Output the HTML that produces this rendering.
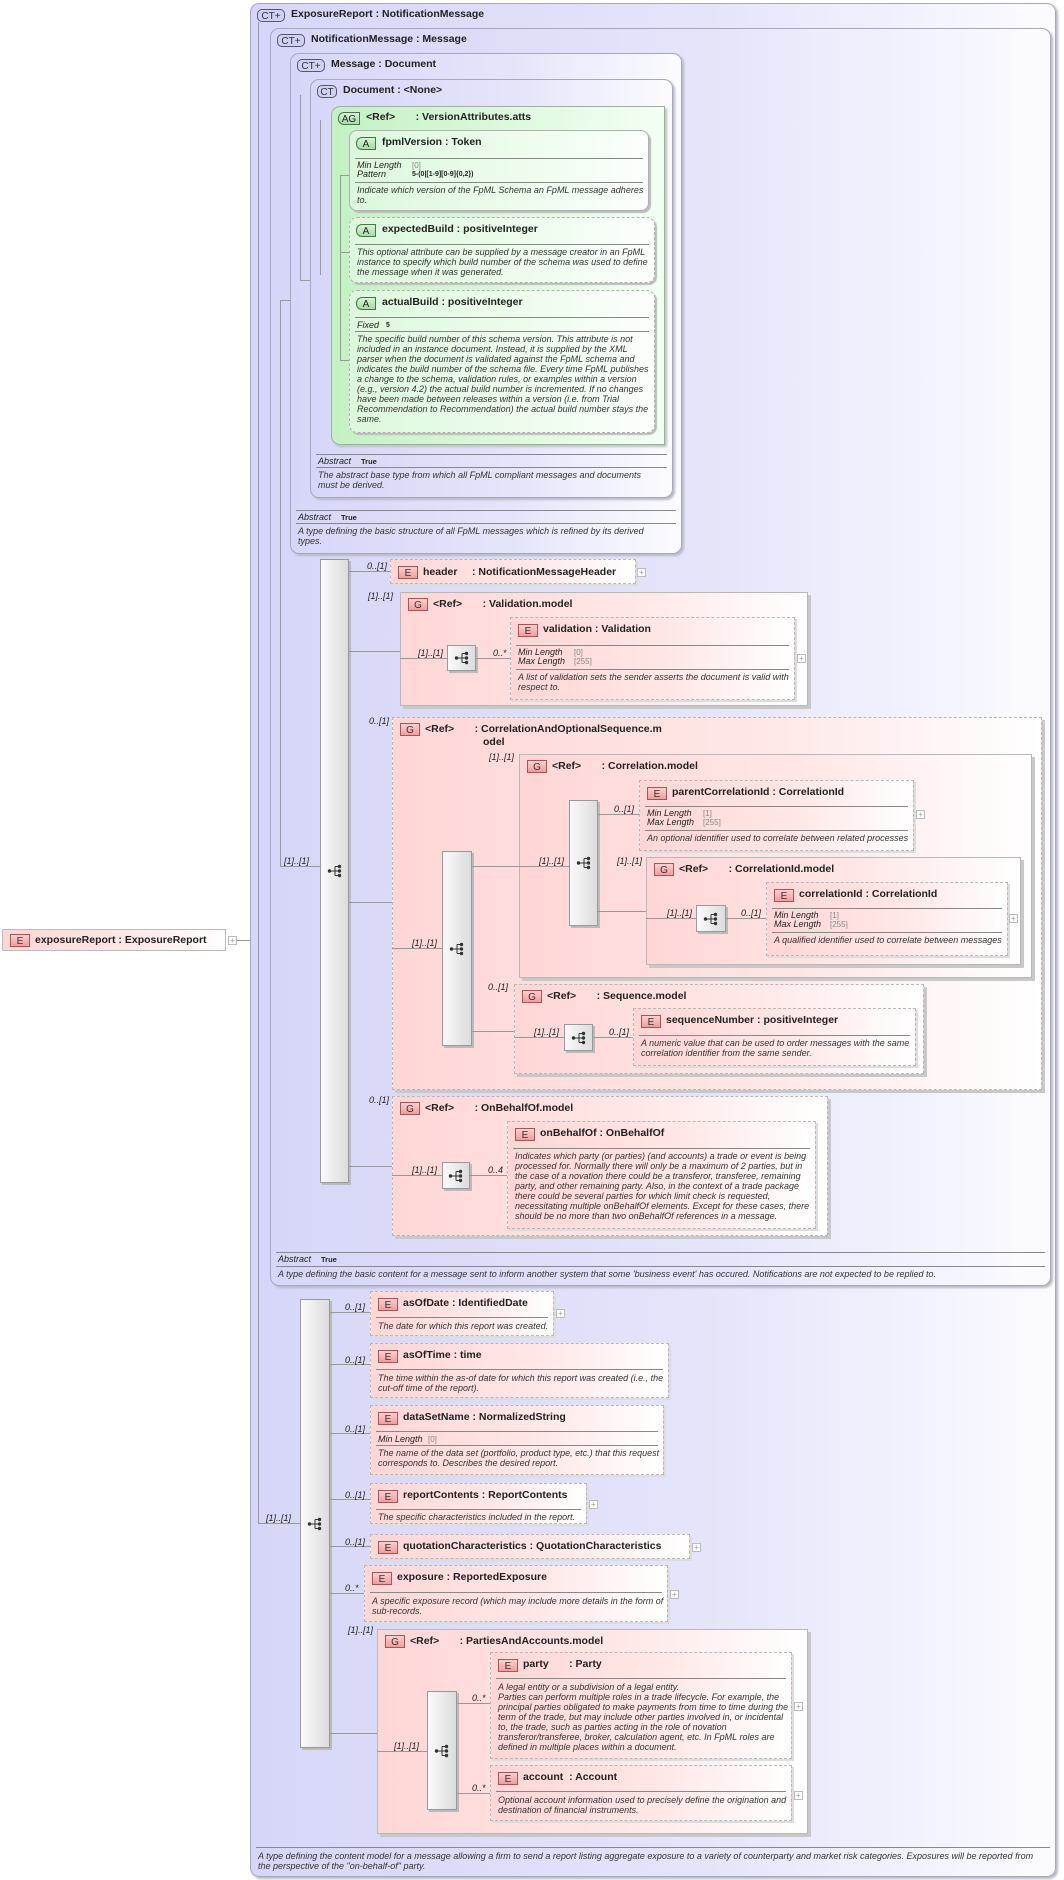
<!DOCTYPE html>
<html><head><meta charset="utf-8">
<style>
body{margin:0;width:1064px;height:1880px;background:#fff;position:relative;overflow:hidden;font-family:"Liberation Sans",sans-serif;color:#222}
.b{position:absolute;box-sizing:border-box}
.ct{border:1px solid #a8a8bc;border-radius:9px;background:linear-gradient(90deg,#d6d6f8 0%,#e4e4fa 55%,#fbfbff 100%);box-shadow:2px 2px 2px #b8b8c8}
.ag{border:1px solid #a0b0a0;border-radius:9px 0 0 9px;background:linear-gradient(90deg,#c4f0c4,#f4fff4);box-shadow:2px 2px 2px #b8c8b8}
.at{border:1px solid #b0b0b0;border-radius:8px;background:linear-gradient(90deg,#dcf8dc,#fbfffb);box-shadow:2px 2px 1px #bbb}
.pk{border:1px solid #b8b8b8;background:linear-gradient(90deg,#ffd6d6 0%,#ffe8e8 60%,#fff 100%);box-shadow:3px 3px 0 #c8c8c8}
.d{border-style:dashed}
.t{position:absolute;font-weight:bold;font-size:10.5px;white-space:nowrap;top:5px;left:32px}
.bg{position:absolute;left:7px;top:5px;height:13px;font-size:10px;line-height:13px;text-align:center;box-sizing:border-box}
.bE{width:20px;background:linear-gradient(180deg,#fbd0d0,#f29c9c);border:1px solid #a55;color:#333}
.bA{width:20px;background:linear-gradient(180deg,#d8f4d8,#a8dca8);border:1px solid #474;border-radius:6px 0 0 6px}
.bC{background:#d0d0f2;border:1px solid #557;border-radius:5px;color:#333}
.hr{position:absolute;left:5px;right:5px;height:1px;background:#888}
.ds{position:absolute;left:7px;font-style:italic;font-size:9px;line-height:10px;white-space:nowrap;color:#333}
.pr{position:absolute;left:7px;font-style:italic;font-size:9px;line-height:9px;white-space:nowrap}
.pv{color:#888;font-style:normal;font-size:8px}
.l{position:absolute;background:#999}
.lb{position:absolute;font-style:italic;font-size:9px;white-space:nowrap;color:#222}
.bar{position:absolute;box-sizing:border-box;border:1px solid #999;background:linear-gradient(90deg,#fafafa,#dcdcdc);box-shadow:2px 2px 0 #bbb}
.ic{position:absolute;left:50%;top:50%;margin:-7px 0 0 -8px}
.pl{position:absolute;width:9px;height:9px;box-sizing:border-box;border:1px solid #bbb;background:#fff;font-size:8px;line-height:7px;text-align:center;color:#999}
</style></head><body>
<svg width="0" height="0" style="position:absolute"><defs><symbol id="sq" viewBox="0 0 16 14"><circle cx="2.5" cy="7" r="1.7" fill="#333"/><path d="M2.5 7H8M8 2.5V11.5M8 2.5H12M8 7H12M8 11.5H12" stroke="#333" stroke-width="1" fill="none"/><circle cx="12.5" cy="2.5" r="1.7" fill="#333"/><circle cx="12.5" cy="7" r="1.7" fill="#333"/><circle cx="12.5" cy="11.5" r="1.7" fill="#333"/></symbol></defs></svg>

<div class="b pk" style="left:2px;top:929px;width:224px;height:22px;box-shadow:none;border-color:#bbb"><div class="bg bE" style="top:4px">E</div><div class="t" style="top:4px">exposureReport : ExposureReport</div></div>
<div class="pl" style="left:228px;top:936px">+</div>
<div class="l" style="left:237px;top:940px;width:13px;height:1px"></div>

<div class="b ct" style="left:250px;top:3px;width:806px;height:1874px">
 <div class="bg bC" style="width:28px;left:6px">CT+</div><div class="t" style="left:40px;top:4px">ExposureReport : NotificationMessage</div>
 <div class="hr" style="top:1843px"></div>
 <div class="ds" style="top:1847px">A type defining the content model for a message allowing a firm to send a report listing aggregate exposure to a variety of counterparty and market risk categories. Exposures will be reported from<br>the perspective of the "on-behalf-of" party.</div>
</div>
<div class="l" style="left:258px;top:22px;width:1px;height:1502px"></div>
<div class="l" style="left:258px;top:1523px;width:42px;height:1px"></div>
<div class="lb" style="left:266px;top:1513px">[1]..[1]</div>

<div class="b ct" style="left:270px;top:28px;width:781px;height:1258px">
 <div class="bg bC" style="width:28px;left:6px">CT+</div><div class="t" style="left:40px;top:4px">NotificationMessage : Message</div>
 <div class="hr" style="top:1223px"></div>
 <div class="pr" style="top:1226px">Abstract &nbsp;&nbsp;&nbsp;<b style="font-style:normal;font-size:7.5px">True</b></div>
 <div class="hr" style="top:1237px"></div>
 <div class="ds" style="top:1240px">A type defining the basic content for a message sent to inform another system that some 'business event' has occured. Notifications are not expected to be replied to.</div>
</div>
<div class="l" style="left:280px;top:300px;width:1px;height:566px"></div>
<div class="l" style="left:280px;top:300px;width:10px;height:1px"></div>
<div class="l" style="left:280px;top:866px;width:40px;height:1px"></div>
<div class="lb" style="left:284px;top:856px">[1]..[1]</div>

<div class="b ct" style="left:290px;top:53px;width:392px;height:501px">
 <div class="bg bC" style="width:28px;left:6px">CT+</div><div class="t" style="left:40px;top:4px">Message : Document</div>
 <div class="hr" style="top:456px"></div>
 <div class="pr" style="top:459px">Abstract &nbsp;&nbsp;&nbsp;<b style="font-style:normal;font-size:7.5px">True</b></div>
 <div class="hr" style="top:469px"></div>
 <div class="ds" style="top:472px">A type defining the basic structure of all FpML messages which is refined by its derived<br>types.</div>
</div>
<div class="l" style="left:300px;top:95px;width:1px;height:185px"></div>
<div class="l" style="left:300px;top:280px;width:10px;height:1px"></div>

<div class="b ct" style="left:310px;top:79px;width:363px;height:419px">
 <div class="bg bC" style="width:20px;left:6px">CT</div><div class="t" style="top:4px">Document : &lt;None&gt;</div>
 <div class="hr" style="top:374px"></div>
 <div class="pr" style="top:377px">Abstract &nbsp;&nbsp;&nbsp;<b style="font-style:normal;font-size:7.5px">True</b></div>
 <div class="hr" style="top:387px"></div>
 <div class="ds" style="top:390px">The abstract base type from which all FpML compliant messages and documents<br>must be derived.</div>
</div>
<div class="l" style="left:320px;top:120px;width:1px;height:155px"></div>

<div class="b ag" style="left:331px;top:106px;width:334px;height:339px">
 <div class="bg bA" style="width:22px;left:6px">AG</div><div class="t" style="left:34px;top:4px">&lt;Ref&gt; &nbsp;&nbsp;&nbsp;&nbsp;&nbsp; : VersionAttributes.atts</div>
</div>
<div class="l" style="left:340px;top:175px;width:1px;height:185px"></div>
<div class="l" style="left:340px;top:175px;width:9px;height:1px"></div>
<div class="l" style="left:340px;top:252px;width:9px;height:1px"></div>
<div class="l" style="left:340px;top:360px;width:9px;height:1px"></div>

<div class="b at" style="left:349px;top:130px;width:300px;height:81px">
 <div class="bg bA" style="left:6px;top:6px">A</div><div class="t">fpmlVersion : Token</div>
 <div class="hr" style="top:27px"></div>
 <div class="pr" style="top:30px">Min Length</div><div class="pr pv" style="left:62px;top:30px">[0]</div>
 <div class="pr" style="top:39px">Pattern</div><div class="pr" style="left:62px;top:39px;font-style:normal;font-weight:bold;font-size:7px">5-(0|[1-9][0-9]{0,2})</div>
 <div class="hr" style="top:51px"></div>
 <div class="ds" style="top:54px">Indicate which version of the FpML Schema an FpML message adheres<br>to.</div>
</div>
<div class="b at d" style="left:349px;top:217px;width:306px;height:66px">
 <div class="bg bA" style="left:6px;top:6px">A</div><div class="t">expectedBuild : positiveInteger</div>
 <div class="hr" style="top:26px"></div>
 <div class="ds" style="top:29px">This optional attribute can be supplied by a message creator in an FpML<br>instance to specify which build number of the schema was used to define<br>the message when it was generated.</div>
</div>
<div class="b at d" style="left:349px;top:290px;width:306px;height:143px">
 <div class="bg bA" style="left:6px;top:6px">A</div><div class="t">actualBuild : positiveInteger</div>
 <div class="hr" style="top:26px"></div>
 <div class="pr" style="top:30px">Fixed</div><div class="pr" style="left:36px;top:30px;font-style:normal;font-weight:bold;font-size:7px">5</div>
 <div class="hr" style="top:40px"></div>
 <div class="ds" style="top:43px">The specific build number of this schema version. This attribute is not<br>included in an instance document. Instead, it is supplied by the XML<br>parser when the document is validated against the FpML schema and<br>indicates the build number of the schema file. Every time FpML publishes<br>a change to the schema, validation rules, or examples within a version<br>(e.g., version 4.2) the actual build number is incremented. If no changes<br>have been made between releases within a version (i.e. from Trial<br>Recommendation to Recommendation) the actual build number stays the<br>same.</div>
</div>

<div class="bar" style="left:320px;top:559px;width:29px;height:624px"><svg class="ic" width="16" height="14"><use href="#sq"/></svg></div>
<div class="l" style="left:349px;top:571px;width:41px;height:1px"></div><div class="lb" style="left:367px;top:561px">0..[1]</div>
<div class="l" style="left:349px;top:651px;width:51px;height:1px"></div><div class="lb" style="left:368px;top:591px">[1]..[1]</div>
<div class="l" style="left:349px;top:902px;width:43px;height:1px"></div><div class="lb" style="left:369px;top:716px">0..[1]</div>
<div class="l" style="left:349px;top:1166px;width:43px;height:1px"></div><div class="lb" style="left:369px;top:1095px">0..[1]</div>

<div class="b pk d" style="left:390px;top:559px;width:246px;height:25px;box-shadow:2px 2px 0 #ddd">
 <div class="bg bE" style="top:6px">E</div><div class="t" style="top:6px">header &nbsp;&nbsp;&nbsp; : NotificationMessageHeader</div></div>
<div class="pl" style="left:637px;top:568px">+</div>

<div class="b pk" style="left:400px;top:592px;width:408px;height:114px">
 <div class="bg bE">G</div><div class="t">&lt;Ref&gt; &nbsp;&nbsp;&nbsp;&nbsp;&nbsp; : Validation.model</div></div>
<div class="l" style="left:400px;top:658px;width:47px;height:1px"></div><div class="lb" style="left:418px;top:648px">[1]..[1]</div>
<div class="bar" style="left:447px;top:645px;width:29px;height:26px"><svg class="ic" width="16" height="14"><use href="#sq"/></svg></div>
<div class="l" style="left:476px;top:658px;width:34px;height:1px"></div><div class="lb" style="left:493px;top:648px">0..*</div>
<div class="b pk d" style="left:510px;top:617px;width:285px;height:83px;box-shadow:2px 2px 0 #ddd">
 <div class="bg bE" style="top:6px">E</div><div class="t" style="top:5px">validation : Validation</div>
 <div class="hr" style="top:27px"></div>
 <div class="pr" style="top:30px">Min Length<br>Max Length</div><div class="pr pv" style="left:63px;top:30px">[0]<br>[255]</div>
 <div class="hr" style="top:51px"></div>
 <div class="ds" style="top:54px">A list of validation sets the sender asserts the document is valid with<br>respect to.</div>
</div>
<div class="pl" style="left:797px;top:654px">+</div>

<div class="b pk d" style="left:392px;top:717px;width:650px;height:373px">
 <div class="bg bE">G</div><div class="t" style="line-height:13px">&lt;Ref&gt; &nbsp;&nbsp;&nbsp;&nbsp;&nbsp; : CorrelationAndOptionalSequence.m<br><span style="padding-left:58px">odel</span></div></div>
<div class="l" style="left:392px;top:948px;width:50px;height:1px"></div><div class="lb" style="left:412px;top:938px">[1]..[1]</div>
<div class="bar" style="left:442px;top:851px;width:30px;height:195px"><svg class="ic" width="16" height="14"><use href="#sq"/></svg></div>
<div class="l" style="left:472px;top:866px;width:47px;height:1px"></div><div class="lb" style="left:489px;top:752px">[1]..[1]</div>
<div class="l" style="left:472px;top:1031px;width:42px;height:1px"></div><div class="lb" style="left:488px;top:982px">0..[1]</div>

<div class="b pk" style="left:519px;top:754px;width:513px;height:224px">
 <div class="bg bE">G</div><div class="t">&lt;Ref&gt; &nbsp;&nbsp;&nbsp;&nbsp;&nbsp; : Correlation.model</div></div>
<div class="l" style="left:519px;top:866px;width:50px;height:1px"></div><div class="lb" style="left:539px;top:856px">[1]..[1]</div>
<div class="bar" style="left:569px;top:800px;width:29px;height:126px"><svg class="ic" width="16" height="14"><use href="#sq"/></svg></div>
<div class="l" style="left:598px;top:814px;width:41px;height:1px"></div><div class="lb" style="left:614px;top:804px">0..[1]</div>
<div class="l" style="left:598px;top:911px;width:48px;height:1px"></div><div class="lb" style="left:617px;top:856px">[1]..[1]</div>

<div class="b pk d" style="left:639px;top:780px;width:275px;height:71px;box-shadow:2px 2px 0 #ddd">
 <div class="bg bE" style="top:6px">E</div><div class="t" style="top:5px">parentCorrelationId : CorrelationId</div>
 <div class="hr" style="top:25px"></div>
 <div class="pr" style="top:28px">Min Length<br>Max Length</div><div class="pr pv" style="left:63px;top:28px">[1]<br>[255]</div>
 <div class="hr" style="top:49px"></div>
 <div class="ds" style="top:52px">An optional identifier used to correlate between related processes</div>
</div>
<div class="pl" style="left:916px;top:810px">+</div>

<div class="b pk" style="left:646px;top:857px;width:375px;height:108px">
 <div class="bg bE">G</div><div class="t">&lt;Ref&gt; &nbsp;&nbsp;&nbsp;&nbsp;&nbsp; : CorrelationId.model</div></div>
<div class="l" style="left:646px;top:918px;width:50px;height:1px"></div><div class="lb" style="left:667px;top:908px">[1]..[1]</div>
<div class="bar" style="left:696px;top:905px;width:30px;height:27px"><svg class="ic" width="16" height="14"><use href="#sq"/></svg></div>
<div class="l" style="left:726px;top:918px;width:40px;height:1px"></div><div class="lb" style="left:741px;top:908px">0..[1]</div>
<div class="b pk d" style="left:766px;top:882px;width:242px;height:74px;box-shadow:2px 2px 0 #ddd">
 <div class="bg bE" style="top:6px">E</div><div class="t" style="top:5px">correlationId : CorrelationId</div>
 <div class="hr" style="top:25px"></div>
 <div class="pr" style="top:28px">Min Length<br>Max Length</div><div class="pr pv" style="left:63px;top:28px">[1]<br>[255]</div>
 <div class="hr" style="top:49px"></div>
 <div class="ds" style="top:52px">A qualified identifier used to correlate between messages</div>
</div>
<div class="pl" style="left:1009px;top:914px">+</div>

<div class="b pk d" style="left:514px;top:984px;width:410px;height:90px">
 <div class="bg bE">G</div><div class="t">&lt;Ref&gt; &nbsp;&nbsp;&nbsp;&nbsp;&nbsp; : Sequence.model</div></div>
<div class="l" style="left:514px;top:1037px;width:50px;height:1px"></div><div class="lb" style="left:534px;top:1027px">[1]..[1]</div>
<div class="bar" style="left:564px;top:1024px;width:29px;height:27px"><svg class="ic" width="16" height="14"><use href="#sq"/></svg></div>
<div class="l" style="left:593px;top:1037px;width:40px;height:1px"></div><div class="lb" style="left:609px;top:1027px">0..[1]</div>
<div class="b pk d" style="left:633px;top:1008px;width:283px;height:58px;box-shadow:2px 2px 0 #ddd">
 <div class="bg bE" style="top:6px">E</div><div class="t" style="top:5px">sequenceNumber : positiveInteger</div>
 <div class="hr" style="top:26px"></div>
 <div class="ds" style="top:29px">A numeric value that can be used to order messages with the same<br>correlation identifier from the same sender.</div>
</div>

<div class="b pk d" style="left:392px;top:1096px;width:436px;height:140px">
 <div class="bg bE">G</div><div class="t">&lt;Ref&gt; &nbsp;&nbsp;&nbsp;&nbsp;&nbsp; : OnBehalfOf.model</div></div>
<div class="l" style="left:392px;top:1175px;width:50px;height:1px"></div><div class="lb" style="left:412px;top:1165px">[1]..[1]</div>
<div class="bar" style="left:442px;top:1162px;width:28px;height:27px"><svg class="ic" width="16" height="14"><use href="#sq"/></svg></div>
<div class="l" style="left:470px;top:1175px;width:37px;height:1px"></div><div class="lb" style="left:488px;top:1165px">0..4</div>
<div class="b pk d" style="left:507px;top:1121px;width:309px;height:108px;box-shadow:2px 2px 0 #ddd">
 <div class="bg bE" style="top:6px">E</div><div class="t" style="top:5px">onBehalfOf : OnBehalfOf</div>
 <div class="hr" style="top:26px"></div>
 <div class="ds" style="top:29px">Indicates which party (or parties) (and accounts) a trade or event is being<br>processed for. Normally there will only be a maximum of 2 parties, but in<br>the case of a novation there could be a transferor, transferee, remaining<br>party, and other remaining party. Also, in the context of a trade package<br>there could be several parties for which limit check is requested,<br>necessitating multiple onBehalfOf elements. Except for these cases, there<br>should be no more than two onBehalfOf references in a message.</div>
</div>

<div class="bar" style="left:300px;top:1299px;width:30px;height:449px"><svg class="ic" width="16" height="14"><use href="#sq"/></svg></div>
<div class="l" style="left:330px;top:1312px;width:40px;height:1px"></div><div class="lb" style="left:345px;top:1302px">0..[1]</div>
<div class="l" style="left:330px;top:1364px;width:40px;height:1px"></div><div class="lb" style="left:345px;top:1355px">0..[1]</div>
<div class="l" style="left:330px;top:1433px;width:40px;height:1px"></div><div class="lb" style="left:345px;top:1424px">0..[1]</div>
<div class="l" style="left:330px;top:1499px;width:40px;height:1px"></div><div class="lb" style="left:345px;top:1490px">0..[1]</div>
<div class="l" style="left:330px;top:1546px;width:40px;height:1px"></div><div class="lb" style="left:345px;top:1537px">0..[1]</div>
<div class="l" style="left:330px;top:1593px;width:34px;height:1px"></div><div class="lb" style="left:345px;top:1583px">0..*</div>
<div class="l" style="left:330px;top:1733px;width:47px;height:1px"></div><div class="lb" style="left:348px;top:1625px">[1]..[1]</div>

<div class="b pk d" style="left:370px;top:1291px;width:184px;height:45px;box-shadow:2px 2px 0 #ddd">
 <div class="bg bE" style="top:6px">E</div><div class="t" style="top:5px">asOfDate : IdentifiedDate</div>
 <div class="hr" style="top:25px"></div>
 <div class="ds" style="top:29px">The date for which this report was created.</div></div>
<div class="pl" style="left:556px;top:1309px">+</div>

<div class="b pk d" style="left:370px;top:1343px;width:299px;height:55px;box-shadow:2px 2px 0 #ddd">
 <div class="bg bE" style="top:6px">E</div><div class="t" style="top:5px">asOfTime : time</div>
 <div class="hr" style="top:25px"></div>
 <div class="ds" style="top:29px">The time within the as-of date for which this report was created (i.e., the<br>cut-off time of the report).</div></div>

<div class="b pk d" style="left:370px;top:1405px;width:294px;height:70px;box-shadow:2px 2px 0 #ddd">
 <div class="bg bE" style="top:6px">E</div><div class="t" style="top:5px">dataSetName : NormalizedString</div>
 <div class="hr" style="top:25px"></div>
 <div class="pr" style="top:29px">Min Length</div><div class="pr pv" style="left:57px;top:29px">[0]</div>
 <div class="hr" style="top:39px"></div>
 <div class="ds" style="top:42px">The name of the data set (portfolio, product type, etc.) that this request<br>corresponds to. Describes the desired report.</div></div>

<div class="b pk d" style="left:370px;top:1483px;width:217px;height:41px;box-shadow:2px 2px 0 #ddd">
 <div class="bg bE" style="top:6px">E</div><div class="t" style="top:5px">reportContents : ReportContents</div>
 <div class="hr" style="top:25px"></div>
 <div class="ds" style="top:28px">The specific characteristics included in the report.</div></div>
<div class="pl" style="left:589px;top:1500px">+</div>

<div class="b pk d" style="left:370px;top:1534px;width:320px;height:25px;box-shadow:2px 2px 0 #ddd">
 <div class="bg bE" style="top:6px">E</div><div class="t" style="top:5px">quotationCharacteristics : QuotationCharacteristics</div></div>
<div class="pl" style="left:692px;top:1543px">+</div>

<div class="b pk d" style="left:364px;top:1565px;width:304px;height:57px;box-shadow:2px 2px 0 #ddd">
 <div class="bg bE" style="top:6px">E</div><div class="t" style="top:5px">exposure : ReportedExposure</div>
 <div class="hr" style="top:26px"></div>
 <div class="ds" style="top:30px">A specific exposure record (which may include more details in the form of<br>sub-records.</div></div>
<div class="pl" style="left:670px;top:1590px">+</div>

<div class="b pk" style="left:377px;top:1629px;width:431px;height:205px">
 <div class="bg bE">G</div><div class="t">&lt;Ref&gt; &nbsp;&nbsp;&nbsp;&nbsp;&nbsp; : PartiesAndAccounts.model</div></div>
<div class="l" style="left:377px;top:1751px;width:50px;height:1px"></div><div class="lb" style="left:394px;top:1741px">[1]..[1]</div>
<div class="bar" style="left:427px;top:1691px;width:30px;height:119px"><svg class="ic" width="16" height="14"><use href="#sq"/></svg></div>
<div class="l" style="left:457px;top:1703px;width:33px;height:1px"></div><div class="lb" style="left:472px;top:1693px">0..*</div>
<div class="l" style="left:457px;top:1793px;width:33px;height:1px"></div><div class="lb" style="left:472px;top:1783px">0..*</div>

<div class="b pk d" style="left:490px;top:1652px;width:302px;height:107px;box-shadow:2px 2px 0 #ddd">
 <div class="bg bE" style="top:6px">E</div><div class="t" style="top:5px">party &nbsp;&nbsp;&nbsp;&nbsp;&nbsp; : Party</div>
 <div class="hr" style="top:25px"></div>
 <div class="ds" style="top:29px">A legal entity or a subdivision of a legal entity.<br>Parties can perform multiple roles in a trade lifecycle. For example, the<br>principal parties obligated to make payments from time to time during the<br>term of the trade, but may include other parties involved in, or incidental<br>to, the trade, such as parties acting in the role of novation<br>transferor/transferee, broker, calculation agent, etc. In FpML roles are<br>defined in multiple places within a document.</div></div>
<div class="pl" style="left:794px;top:1702px">+</div>

<div class="b pk d" style="left:490px;top:1765px;width:302px;height:56px;box-shadow:2px 2px 0 #ddd">
 <div class="bg bE" style="top:6px">E</div><div class="t" style="top:5px">account &nbsp;: Account</div>
 <div class="hr" style="top:25px"></div>
 <div class="ds" style="top:29px">Optional account information used to precisely define the origination and<br>destination of financial instruments.</div></div>
<div class="pl" style="left:794px;top:1791px">+</div>

</body></html>
